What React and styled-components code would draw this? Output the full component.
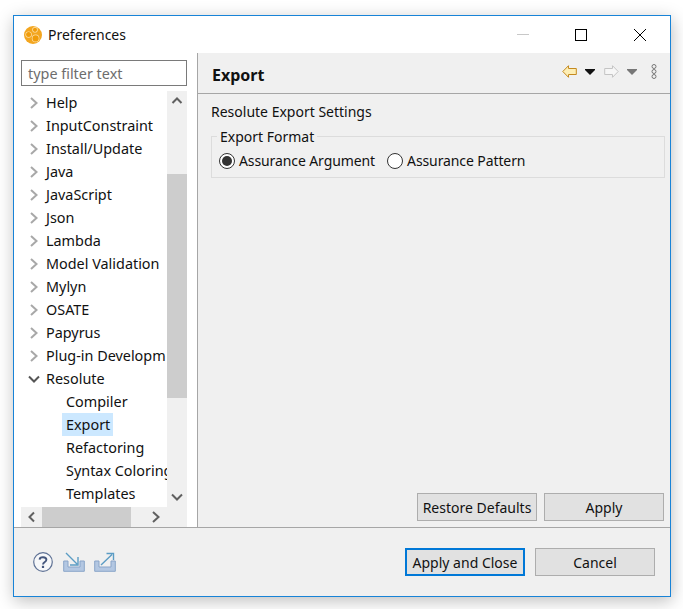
import React from 'react';
import styled, { createGlobalStyle } from 'styled-components';

const Global = createGlobalStyle`
  html, body { margin: 0; padding: 0; background: #fff; }
  body { width: 683px; height: 609px; overflow: hidden; font-family: "Noto Sans", "Open Sans", sans-serif; }
  * { box-sizing: border-box; }
`;
const Page = styled.div`
  padding: 15px 0 0 13px;
`;
const Window = styled.div`
  width: 658px;
  height: 582px;
  border: 1px solid #1883d7;
  background: #f0f0f0;
  box-shadow: 1px 4px 16px rgba(0,0,0,.26);
  display: flex;
  flex-direction: column;
  color: #111;
  font-size: 14px;
`;
const TitleBar = styled.div`
  height: 37px;
  background: #fff;
  display: flex;
  align-items: center;
  padding: 0 1px 0 10px;
  flex: none;
`;
const AppTitle = styled.span`
  margin-left: 6px;
  flex: 1;
`;
const WinBtn = styled.div`
  width: ${p => p.$w || 59}px;
  height: 37px;
  display: flex;
  align-items: center;
  justify-content: center;
`;
const Main = styled.div`
  flex: 1;
  display: flex;
  min-height: 0;
  border-bottom: 1px solid #a6a6a6;
`;
const Side = styled.div`
  width: 184px;
  background: #fff;
  border-right: 1px solid #a6a6a6;
  padding: 7px 10px 0 7px;
  flex: none;
  display: flex;
  flex-direction: column;
  font-size: 14.4px;
`;
const Filter = styled.div`
  height: 26px;
  border: 1px solid #7a7a7a;
  padding-left: 6px;
  color: #6d6d6d;
  line-height: 26px;
`;
const TreeBox = styled.div`
  margin-top: 5px;
  flex: 1;
  display: grid;
  grid-template-columns: 146px 20px;
  grid-template-rows: 416px 20px;
`;
const Rows = styled.div`
  overflow: hidden;
`;
const Row = styled.div`
  height: 23px;
  display: flex;
  align-items: center;
  padding-left: ${p => p.$leaf ? 45 : 7}px;
  white-space: nowrap;
`;
const Caret = styled.span`
  width: 14px;
  flex: none;
  display: flex;
  align-items: center;
`;
const Label = styled.span`
  padding: 0 3px 0 4px;
  margin-left: ${p => p.$leaf ? -4 : 0}px;
  line-height: 23px;
  background: ${p => p.$sel ? '#cce8ff' : 'transparent'};
`;
const VBar = styled.div`
  background: #f0f0f0;
  display: flex;
  flex-direction: column;
`;
const HBar = styled.div`
  grid-column: 1 / span 2;
  background: #f0f0f0;
  display: flex;
  align-items: stretch;
`;
const SBtn = styled.div`
  flex: none;
  width: ${p => p.$w || 20}px;
  height: ${p => p.$h || 20}px;
  display: flex;
  align-items: center;
  justify-content: center;
`;
const VTrack = styled.div`
  flex: 1;
  padding-top: 63px;
`;
const VThumb = styled.div`
  height: 224px;
  background: #cdcdcd;
`;
const HTrack = styled.div`
  flex: 1;
`;
const HThumb = styled.div`
  width: 89px;
  height: 100%;
  background: #cdcdcd;
`;
const Content = styled.div`
  flex: 1;
  display: flex;
  flex-direction: column;
  padding: 0 5px 0 13px;
`;
const Header = styled.div`
  height: 41px;
  margin: 0 -5px 0 -13px;
  padding: 0 13px 0 14px;
  border-bottom: 1px solid #a6a6a6;
  display: flex;
  align-items: flex-start;
  justify-content: space-between;
`;
const HeaderTitle = styled.h1`
  margin: 11px 0 0;
  font-size: 16px;
  line-height: 22px;
  font-weight: 700;
`;
const Nav = styled.div`
  margin-top: 11px;
  display: flex;
  align-items: center;
`;
const NavGap = styled.span`
  width: ${p => p.$w}px;
`;
const Intro = styled.div`
  margin-top: 8px;
  line-height: 20px;
`;
const Group = styled.fieldset`
  margin: 4px 0 0;
  padding: 0 0 0 7px;
  border: 1px solid #dcdcdc;
  height: 52px;
  display: block;
`;
const Legend = styled.legend`
  padding: 2px 3px 0;
  margin-left: -2px;
  line-height: 18px;
`;
const Radios = styled.div`
  display: flex;
  align-items: center;
  gap: 12px;
  margin-top: 5px;
  line-height: 20px;
  letter-spacing: -.1px;
`;
const Radio = styled.div`
  display: flex;
  align-items: center;
  gap: 4px;
`;
const RadioDot = styled.span`
  width: 16px;
  height: 16px;
  border-radius: 50%;
  border: 1px solid #333;
  background: #fff;
  display: flex;
  align-items: center;
  justify-content: center;
  &::after {
    content: "";
    width: 10px;
    height: 10px;
    border-radius: 50%;
    background: ${p => p.$on ? '#333' : 'transparent'};
  }
`;
const Spacer = styled.div`
  flex: 1;
`;
const Buttons = styled.div`
  display: flex;
  justify-content: flex-end;
  gap: ${p => p.$gap || 7}px;
`;
const Btn = styled.div`
  width: ${p => p.$w}px;
  height: 28px;
  background: #e1e1e1;
  border: ${p => p.$def ? '2px solid #0078d7' : '1px solid #adadad'};
  display: flex;
  align-items: center;
  justify-content: center;
  white-space: nowrap;
`;
const ContentButtons = styled(Buttons)`
  margin: 0 1px 6px 0;
`;
const Footer = styled.div`
  height: 68px;
  flex: none;
  display: flex;
  align-items: center;
  justify-content: space-between;
  padding: 0 15px 0 19px;
`;
const FootIcons = styled.div`
  display: flex;
  align-items: center;
  gap: 9.5px;
`;

const Chev = ({ d, color = '#a8a8a8', w = 2 }) => {
  const paths = {
    r: 'M3 1 L8.5 6 L3 11',
    l: 'M8 1.5 L3.5 6 L8 10.5',
    d: 'M1 3.5 L6 8.5 L11 3.5',
    u: 'M1.5 8 L6 3.5 L10.5 8',
  };
  return <svg width="12" height="12" viewBox="0 0 12 12"><path d={paths[d]} fill="none" stroke={color} strokeWidth={w} /></svg>;
};

const Logo = () => (
  <svg width="18" height="18" viewBox="0 0 18 18">
    <circle cx="9" cy="9" r="9" fill="#f3a61f" />
    <circle cx="11" cy="3.8" r="2.8" fill="#fbe0ad" />
    <circle cx="4.6" cy="8.6" r="3.2" fill="#fbe0ad" />
    <circle cx="11.6" cy="12.4" r="3.8" fill="#fbe0ad" />
    <circle cx="11" cy="3.8" r="2.1" fill="#f09c0a" />
    <circle cx="4.6" cy="8.6" r="2.5" fill="#f09c0a" />
    <circle cx="11.6" cy="12.4" r="3.1" fill="#f09c0a" />
  </svg>
);
const ArrowLeft = () => (
  <svg width="15" height="13" viewBox="0 0 15 13">
    <path d="M6.5 .7 L.8 6.5 L6.5 12.3 V9.5 H14.3 V3.5 H6.5 Z" fill="#fdeeb5" stroke="#c58a1f" strokeWidth="1" />
  </svg>
);
const ArrowRight = () => (
  <svg width="15" height="13" viewBox="0 0 15 13">
    <path d="M8.5 .7 L14.2 6.5 L8.5 12.3 V9.5 H.7 V3.5 H8.5 Z" fill="#f6f6f6" stroke="#c4c4c4" strokeWidth="1" />
  </svg>
);
const Tri = ({ c }) => (
  <svg width="10" height="6" viewBox="0 0 10 6"><path d="M0 0 H10 V1 L5 6 L0 1 Z" fill={c} /></svg>
);
const Dots = () => (
  <svg width="6" height="15" viewBox="0 0 6 15">
    {[2.5, 7.5, 12.5].map(y => <circle key={y} cx="3" cy={y} r="2" fill="#f0f0f0" stroke="#777" strokeWidth="1" />)}
  </svg>
);
const Help = () => (
  <svg width="20" height="20" viewBox="0 0 20 20">
    <circle cx="10" cy="10" r="9.3" fill="#f6f7f9" stroke="#5f7295" strokeWidth="1.2" />
    <path d="M6.6 7.6 C6.8 4.4 13.4 4.4 13.4 7.8 C13.4 10.2 10 9.8 10 12.6" fill="none" stroke="#44567d" strokeWidth="1.9" />
    <rect x="8.9" y="13.8" width="2.2" height="2.2" fill="#44567d" />
  </svg>
);
const Tray = ({ out }) => (
  <svg width="22" height="20" viewBox="0 0 22 20">
    <path d="M.7 9 H5 V15 H17 V9 H21.3 V19.3 H.7 Z" fill="#b3c7e2" stroke="#8aa5c9" strokeWidth="1" />
    {out
      ? <path d="M7 13 L18 2.5 M12.5 1.5 H19.5 V8" fill="none" stroke="#5b9cc4" strokeWidth="1.4" />
      : <path d="M3 1 L14 12 M15 5 V13 H7" fill="none" stroke="#5b9cc4" strokeWidth="1.4" />}
  </svg>
);

const groups = ['Help','InputConstraint','Install/Update','Java','JavaScript','Json','Lambda','Model Validation','Mylyn','OSATE','Papyrus','Plug-in Developm'];
const leaves = ['Compiler','Export','Refactoring','Syntax Coloring','Templates'];

export default function App() {
  return (
    <Page>
      <Global />
      <Window>
        <TitleBar>
          <Logo />
          <AppTitle>Preferences</AppTitle>
          <WinBtn><svg width="12" height="2"><rect width="12" height="1" fill="#c8c8c8" /></svg></WinBtn>
          <WinBtn $w={58}><svg width="12" height="12"><rect x=".5" y=".5" width="11" height="11" fill="none" stroke="#000" /></svg></WinBtn>
          <WinBtn><svg width="12" height="12" viewBox="0 0 12 12"><path d="M0 0 L12 12 M12 0 L0 12" stroke="#000" strokeWidth="1" /></svg></WinBtn>
        </TitleBar>
        <Main>
          <Side>
            <Filter>type filter text</Filter>
            <TreeBox>
              <Rows>
                {groups.map(g => (
                  <Row key={g}><Caret><Chev d="r" /></Caret><Label>{g}</Label></Row>
                ))}
                <Row><Caret><Chev d="d" color="#555" /></Caret><Label>Resolute</Label></Row>
                {leaves.map(l => (
                  <Row key={l} $leaf><Label $leaf $sel={l === 'Export'}>{l}</Label></Row>
                ))}
              </Rows>
              <VBar>
                <SBtn><Chev d="u" color="#606060" /></SBtn>
                <VTrack><VThumb /></VTrack>
                <SBtn><Chev d="d" color="#606060" /></SBtn>
              </VBar>
              <HBar>
                <SBtn $w={21}><Chev d="l" color="#606060" /></SBtn>
                <HTrack><HThumb /></HTrack>
                <SBtn $w={21}><Chev d="r" color="#606060" /></SBtn>
                <SBtn $w={21} />
              </HBar>
            </TreeBox>
          </Side>
          <Content>
            <Header>
              <HeaderTitle>Export</HeaderTitle>
              <Nav>
                <ArrowLeft />
                <NavGap $w={8} />
                <Tri c="#111" />
                <NavGap $w={9} />
                <ArrowRight />
                <NavGap $w={8} />
                <Tri c="#777" />
                <NavGap $w={14} />
                <Dots />
              </Nav>
            </Header>
            <Intro>Resolute Export Settings</Intro>
            <Group>
              <Legend>Export Format</Legend>
              <Radios>
                <Radio><RadioDot $on /><span>Assurance Argument</span></Radio>
                <Radio><RadioDot /><span>Assurance Pattern</span></Radio>
              </Radios>
            </Group>
            <Spacer />
            <ContentButtons>
              <Btn $w={120}>Restore Defaults</Btn>
              <Btn $w={120}>Apply</Btn>
            </ContentButtons>
          </Content>
        </Main>
        <Footer>
          <FootIcons>
            <Help />
            <Tray />
            <Tray out />
          </FootIcons>
          <Buttons $gap={10}>
            <Btn $w={120} $def>Apply and Close</Btn>
            <Btn $w={120}>Cancel</Btn>
          </Buttons>
        </Footer>
      </Window>
    </Page>
  );
}
